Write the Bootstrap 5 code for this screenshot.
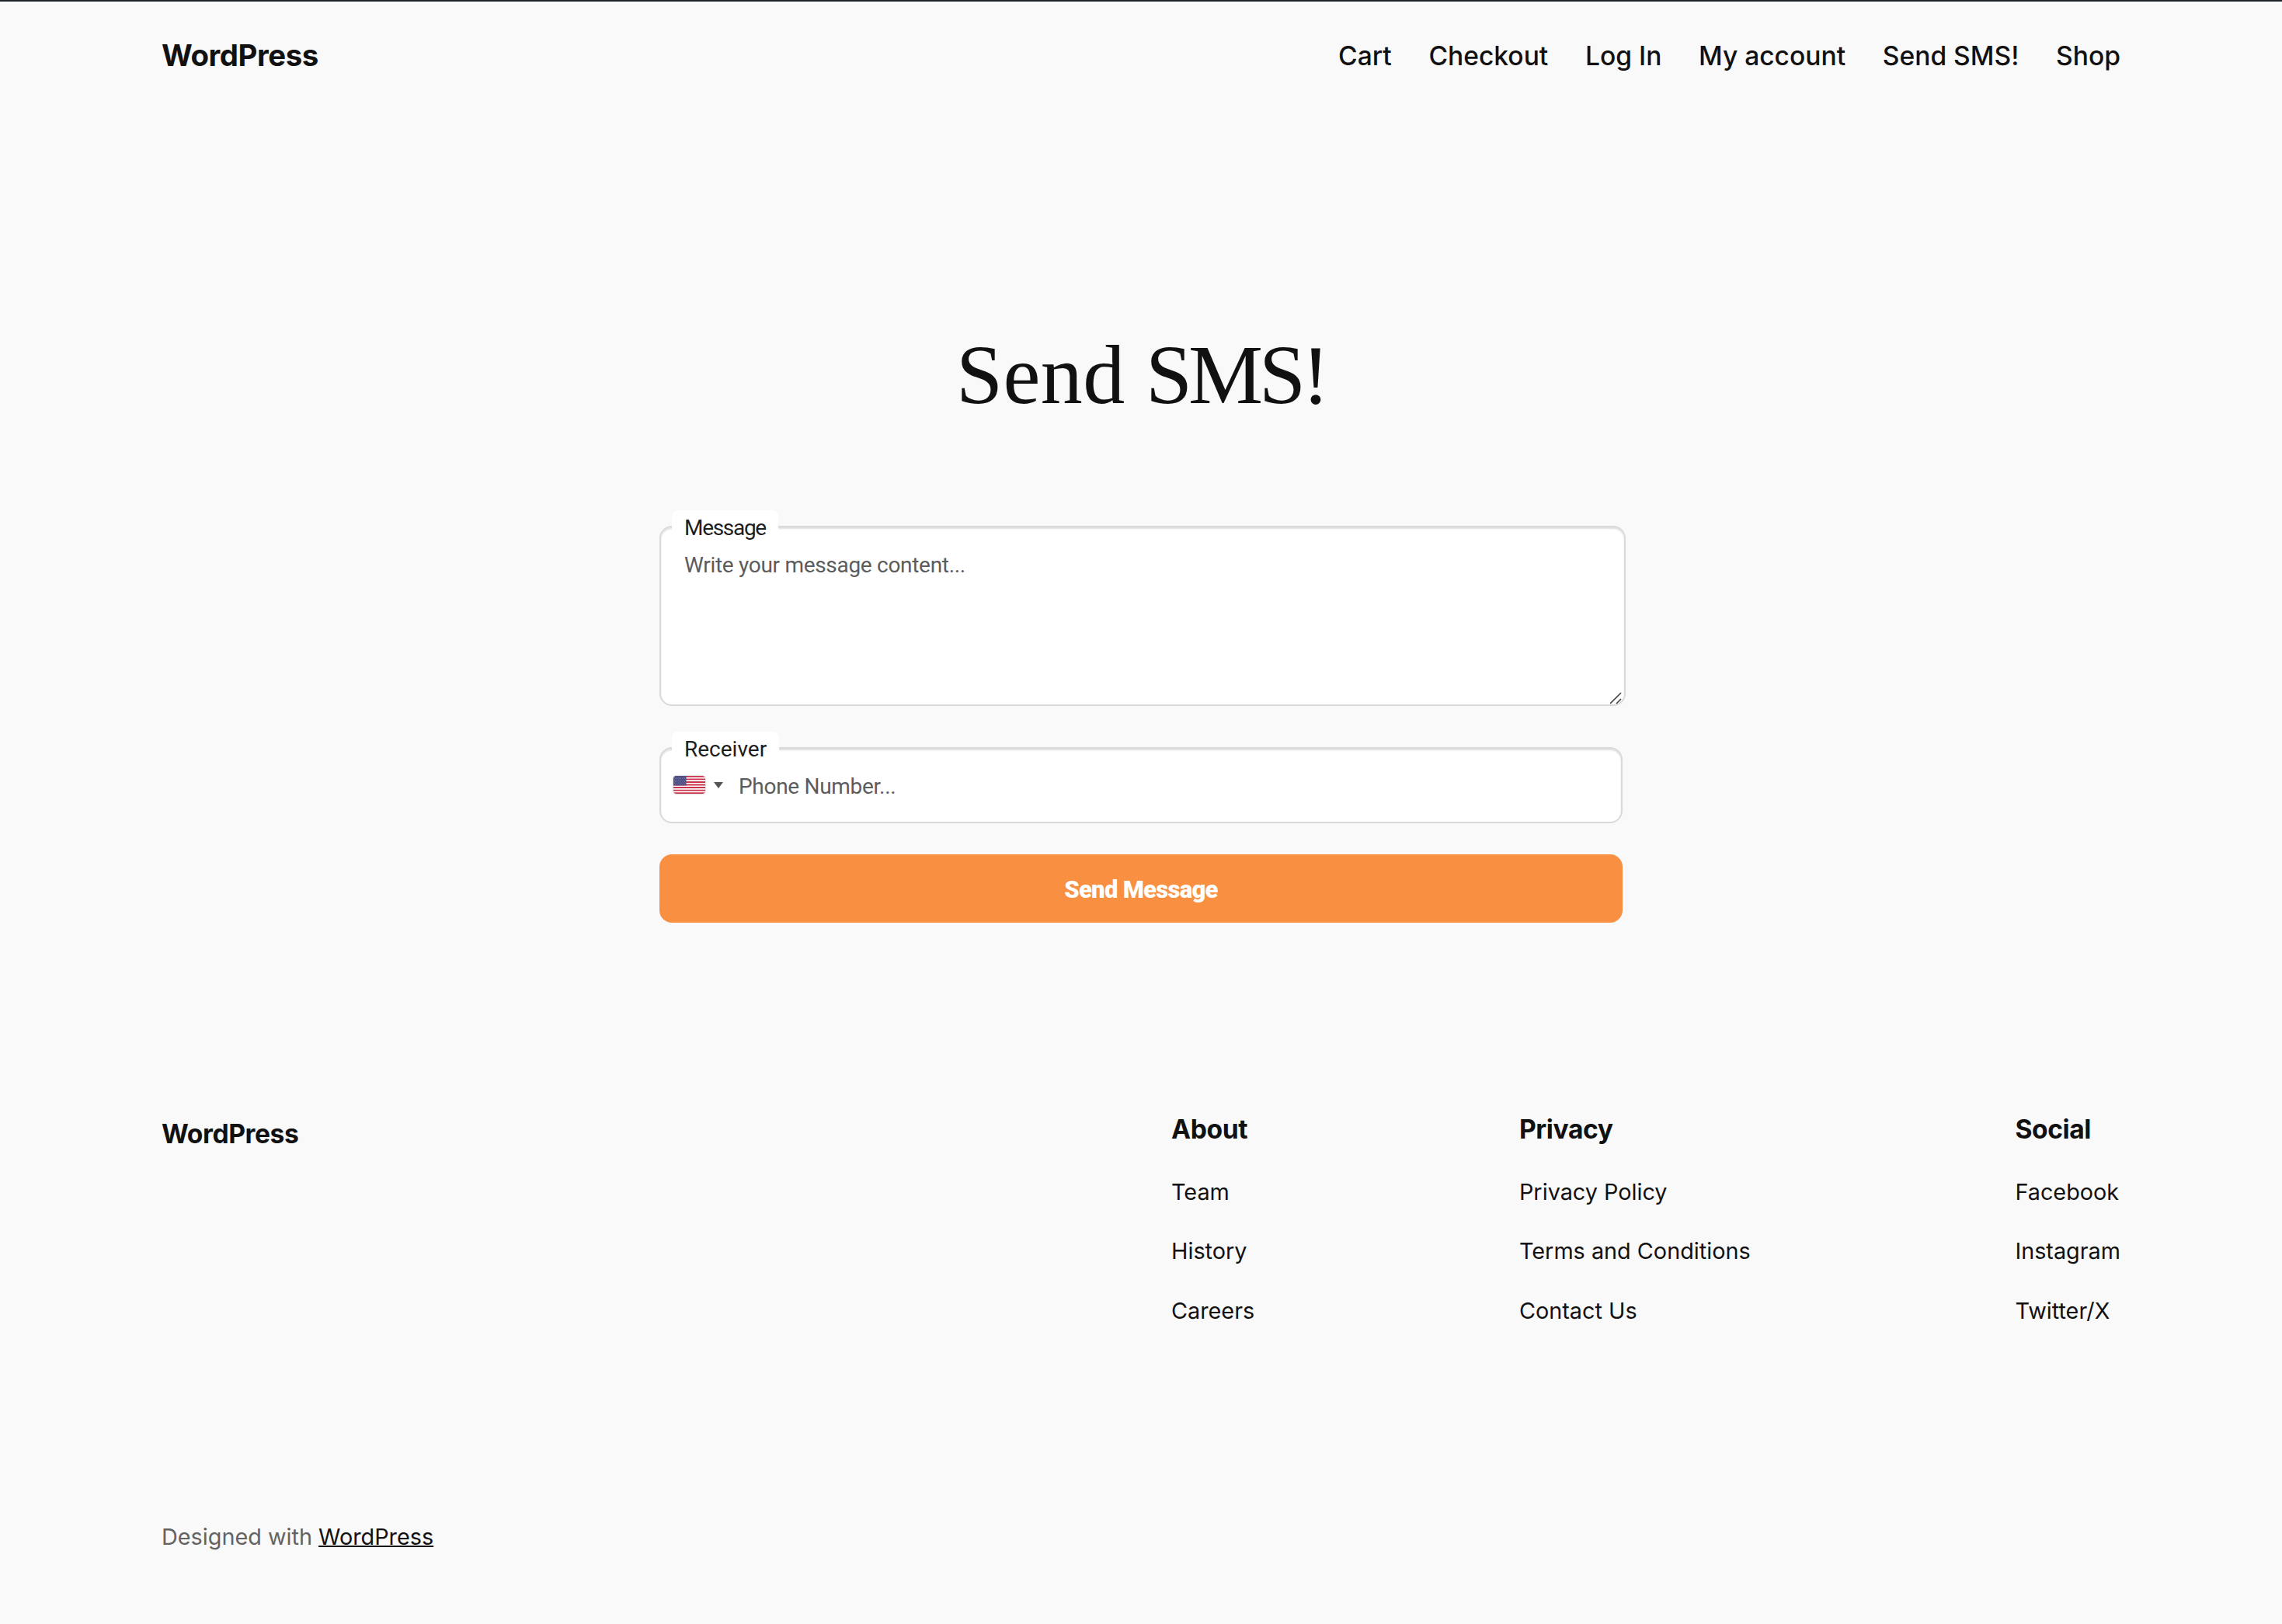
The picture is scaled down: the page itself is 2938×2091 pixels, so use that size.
<!DOCTYPE html>
<html lang="en">
<head>
    <meta charset="UTF-8">
    <meta name="viewport" content="width=device-width, initial-scale=1.0">
    <title>Send SMS! - WordPress</title>

    <link href="https://cdn.jsdelivr.net/npm/bootstrap@5.3.0/dist/css/bootstrap.min.css" rel="stylesheet">
    <style>
        body {
            background-color: #f9f9f9;
            color: #111;
            font-family: Inter, sans-serif;
            font-size: 28.8px;
            line-height: 1.55;
            border-top: 2px solid #1d2327;
        }

        a { color: inherit; text-decoration: none; }

        .site-wrap { padding: 0 208px; }

        .site-header { height: 138px; }
        .site-title { font-size: 38.4px; font-weight: 700; line-height: 1; letter-spacing: -.45px; }
        .site-nav { gap: 47.7px; font-size: 33.6px; font-weight: 500; line-height: 1; padding-top: 2px; }

        .page-title {
            font-family: "Liberation Serif", serif;
            font-size: 108px;
            font-weight: 400;
            line-height: 124px;
            letter-spacing: .4px;
            word-spacing: -1px;
            margin: 281px 0 132px;
        }
        .page-title .tight { letter-spacing: -5px; }

        .sms-form { width: 1240px; font-family: Roboto, sans-serif; font-size: 28px; }
        .message-field { margin-bottom: 53px; }
        .phone-field { margin-bottom: 40px; }
        .sms-form .form-label {
            left: 16px;
            top: -20px;
            height: 42px;
            padding: 2px 16px 0;
            line-height: 42px;
            background: #fff;
            border-radius: 8px;
            color: #1e1e1e;
            z-index: 2;
        }
        .message-field .form-label { letter-spacing: -1.3px; }
        .sms-form .form-control {
            font-size: 28px;
            line-height: 34px;
            letter-spacing: -.3px;
            border: 2px solid #d9d9d9;
            border-radius: 16px;
            box-shadow: inset 0 2px 2px rgba(0, 0, 0, .13);
            background: #fff;
        }
        .sms-form .form-control::placeholder { color: #5c5c5c; opacity: 1; }
        .message-box { width: 1244px; height: 232px; padding: 32px 30px; resize: none; display: block; }
        .sms-form .phone-box { height: 98px; padding: 2px 32px 0 100px; }
        .grip { right: 0; bottom: 2px; }
        .country { left: 18px; top: 37px; gap: 11px; }
        .flag { border-radius: 4px; box-shadow: 0 0 2px #888; opacity: .85; }
        .sms-form .send-btn {
            height: 88px;
            border: 0;
            border-radius: 16px;
            background: #f88f41;
            color: #fff;
            font-family: Roboto, sans-serif;
            font-size: 31px;
            font-weight: 900;
            letter-spacing: -.7px;
            padding: 4px 0 0;
        }

        .site-footer { margin-top: 238px; }
        .footer-title { font-size: 33.6px; font-weight: 700; line-height: 1; letter-spacing: -.4px; margin-top: 17px; }
        .footer-cols { width: 1222px; }
        .footer-cols h2 { font-size: 33.6px; font-weight: 700; line-height: 40px; letter-spacing: -.4px; margin: 8px 0 0; }
        .footer-cols ul { margin: 41px 0 0; line-height: 40px; }
        .footer-cols li + li { margin-top: 36.4px; }
        .credits { margin-top: 249px; line-height: 44px; color: #636363; }
        .credits a { color: #111; text-decoration: underline; text-decoration-thickness: 2px; }
    </style>
</head>
<body>

    <div class="site-wrap">
        <header class="site-header d-flex align-items-center justify-content-between">
            <a href="#" class="site-title">WordPress</a>
            <nav class="site-nav d-flex">
                <a href="#">Cart</a>
                <a href="#">Checkout</a>
                <a href="#">Log In</a>
                <a href="#">My account</a>
                <a href="#">Send SMS!</a>
                <a href="#">Shop</a>
            </nav>
        </header>

        <main>
            <h1 class="page-title text-center">Send <span class="tight">SMS!</span></h1>

            <form class="sms-form mx-auto">
                <div class="message-field position-relative">
                    <label for="message" class="form-label position-absolute mb-0">Message</label>
                    <textarea id="message" class="form-control message-box" placeholder="Write your message content..."></textarea>
                    <!-- Resize grip -->
                    <svg class="grip position-absolute" width="16" height="16" viewBox="0 0 16 16" stroke="#444" stroke-width="1.6" fill="none">
                        <path d="M0 15 14 1M8 15l6-6"/>
                    </svg>
                </div>

                <div class="phone-field position-relative">
                    <label for="phone" class="form-label position-absolute mb-0">Receiver</label>
                    <input type="tel" id="phone" class="form-control phone-box" placeholder="Phone Number...">
                    <!-- Country picker -->
                    <div class="country position-absolute d-flex align-items-center">
                        <svg class="flag" width="41" height="23" viewBox="0 0 41 23">
                            <rect width="41" height="23" fill="#fff"/>
                            <path stroke="#c1122f" stroke-width="1.77" d="M0 .9h41M0 4.4h41M0 8h41M0 11.5h41M0 15h41M0 18.6h41M0 22.1h41"/>
                            <rect width="16.5" height="12.4" fill="#2b2a6b"/>
                            <path stroke="#a9a9c8" stroke-width=".7" stroke-dasharray=".8 1.6" d="M1 1.5h15M2 3.4h14M1 5.3h15M2 7.2h14M1 9.1h15M2 11h14"/>
                        </svg>
                        <svg width="12" height="8" viewBox="0 0 12 8"><path fill="#555" d="M0 0h12L6 8z"/></svg>
                    </div>
                </div>

                <button type="button" class="btn send-btn w-100">Send Message</button>
            </form>
        </main>

        <footer class="site-footer">
            <div class="d-flex justify-content-between align-items-start">
                <a href="#" class="footer-title">WordPress</a>
                <div class="footer-cols d-flex justify-content-between">
                    <div>
                        <h2>About</h2>
                        <ul class="list-unstyled">
                            <li><a href="#">Team</a></li>
                            <li><a href="#">History</a></li>
                            <li><a href="#">Careers</a></li>
                        </ul>
                    </div>
                    <div>
                        <h2>Privacy</h2>
                        <ul class="list-unstyled">
                            <li><a href="#">Privacy Policy</a></li>
                            <li><a href="#">Terms and Conditions</a></li>
                            <li><a href="#">Contact Us</a></li>
                        </ul>
                    </div>
                    <div>
                        <h2>Social</h2>
                        <ul class="list-unstyled">
                            <li><a href="#">Facebook</a></li>
                            <li><a href="#">Instagram</a></li>
                            <li><a href="#">Twitter/X</a></li>
                        </ul>
                    </div>
                </div>
            </div>
            <p class="credits mb-0">Designed with <a href="#">WordPress</a></p>
        </footer>
    </div>

    <script src="https://cdn.jsdelivr.net/npm/bootstrap@5.3.0/dist/js/bootstrap.bundle.min.js"></script>
</body>
</html>
